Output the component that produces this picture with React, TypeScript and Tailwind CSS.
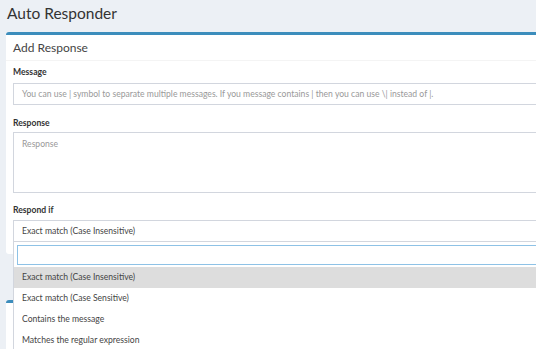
export default function App() {
  const options = [
    'Exact match (Case Insensitive)',
    'Exact match (Case Sensitive)',
    'Contains the message',
    'Matches the regular expression',
  ];

  return (
    <div className="relative h-[349px] w-[536px] overflow-hidden bg-[#ecf0f5] font-['Lato',sans-serif] text-[#333]">
      <h1 className="px-[7px] text-[15.5px] leading-[26px] text-[#333]">Auto Responder</h1>

      <div className="ml-[6px] mr-[-20px] mt-[6px] rounded-[3px] border-t-[3px] border-[#3c8dbc] bg-white">
        <div className="border-b border-[#f4f4f4] px-[7px] text-[12px] leading-[25px] text-[#444]">
          Add Response
        </div>
        <div className="px-[7px] pb-[12px] pt-[4px]">
          <label className="block text-[8.6px] font-bold leading-[14px]">Message</label>
          <div className="mt-[4px] flex h-[22px] items-center border border-[#d2d6de] px-[8px] text-[8.6px] text-[#999]">
            You can use | symbol to separate multiple messages. If you message contains | then you can use \| instead of |.
          </div>
          <label className="mt-[11px] block text-[8.6px] font-bold leading-[14px]">Response</label>
          <div className="mt-[2px] h-[61px] border border-[#d2d6de] px-[8px] pt-[5px] text-[8.6px] text-[#999]">
            Response
          </div>
          <label className="mt-[10px] block text-[8.6px] font-bold leading-[14px]">Respond if</label>
          <div className="mt-[3px] flex h-[22px] items-center border border-[#d2d6de] px-[8px] text-[8.6px] text-[#444]">
            Exact match (Case Insensitive)
          </div>
        </div>
      </div>

      <div className="ml-[6px] mr-[-20px] mt-[46px] h-[60px] rounded-[3px] border-t-[3px] border-[#3c8dbc] bg-white" />

      {/* select2 dropdown, open under the select */}
      <div className="absolute left-[13px] top-[242px] h-[120px] w-[560px] border-l border-[#d2d6de] bg-white">
        <div className="px-[3px] pb-[2px] pt-[3px]">
          <div className="h-[20px] border border-[#8ec2e6] bg-white" />
        </div>
        <ul className="text-[8.6px] text-[#444]">
          {options.map((o, i) => (
            <li key={o} className={`flex h-[21px] items-center px-[8px] ${i === 0 ? 'bg-[#ddd]' : ''}`}>
              {o}
            </li>
          ))}
        </ul>
      </div>
    </div>
  );
}
